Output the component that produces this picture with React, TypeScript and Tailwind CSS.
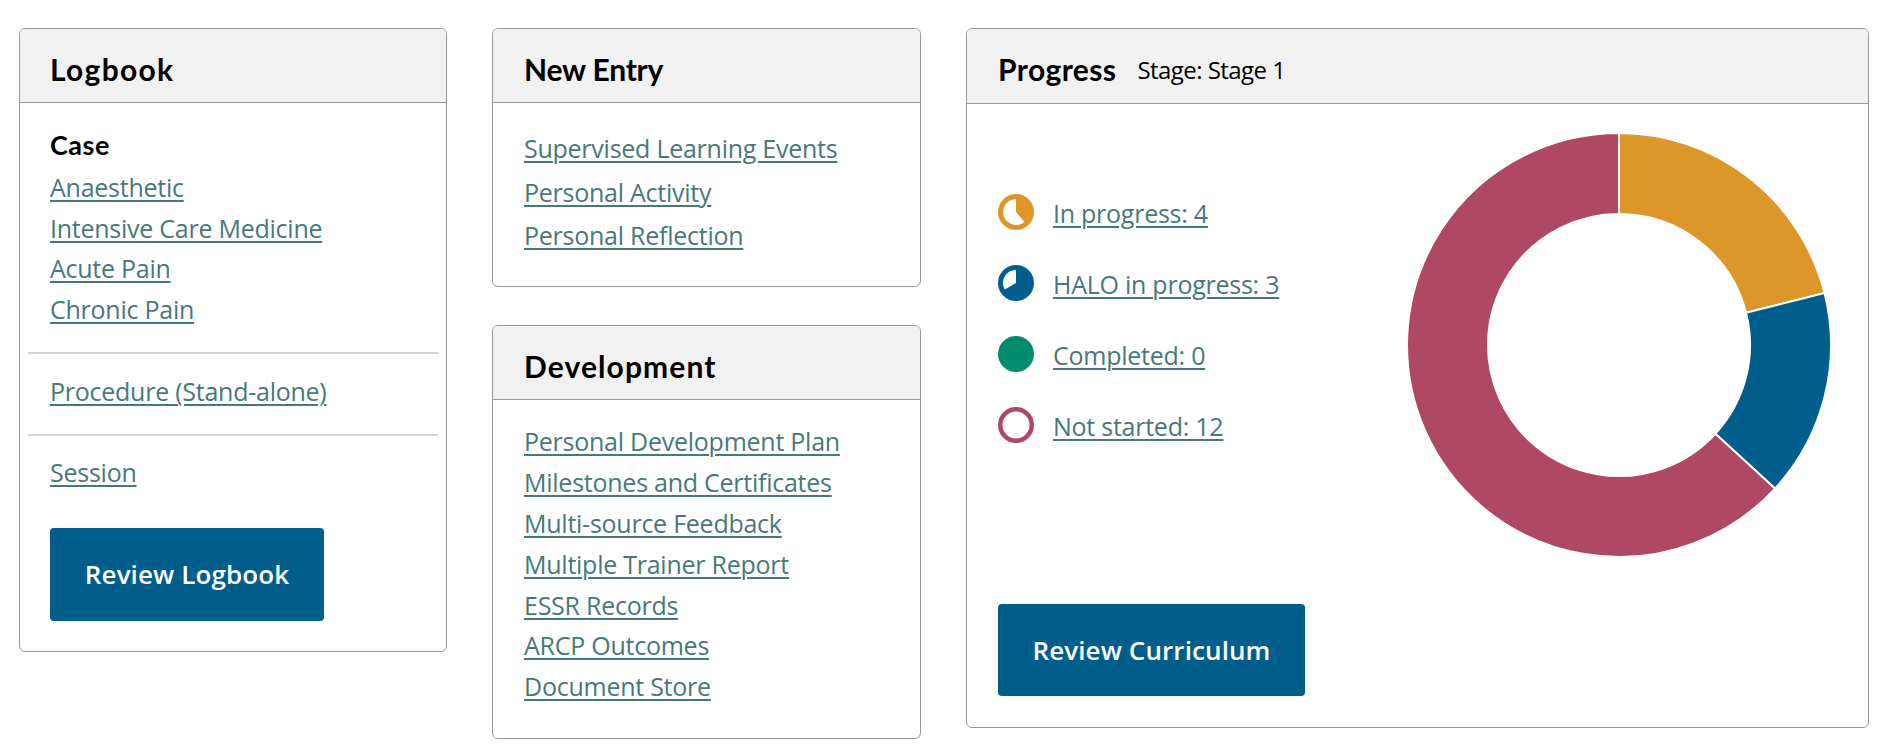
const link = "text-[#47797a] underline decoration-[2px] underline-offset-[3px] [font-family:'Open_Sans',sans-serif] text-[25px] leading-[34px] tracking-[-0.25px] block w-fit";
const head = "[font-family:'Lato',sans-serif] font-bold text-[30px] text-black leading-[36px]";
const btn = "bg-[#005e8c] text-white [font-family:'Open_Sans',sans-serif] font-semibold text-[26px] tracking-[0.1px] rounded-[4px] flex items-center justify-center";

function Panel({ title, titleClass, extra, className, headerClass, children }: { title: string; titleClass: string; extra?: string; className?: string; headerClass: string; children: React.ReactNode }) {
  return (
    <section className={"border border-[#999] rounded-[6px] overflow-hidden bg-white " + (className ?? "")}>
      <header className={"bg-[#f1f1f1] border-b border-[#999] flex items-center pt-[6px] " + headerClass}>
        <h2 className={head + " " + titleClass}>{title}</h2>
        {extra && <span className="ml-[21px] mt-[1px] text-[24px] text-black [font-family:'Open_Sans',sans-serif] tracking-[-0.55px]">{extra}</span>}
      </header>
      {children}
    </section>
  );
}

function Status({ children, label }: { children: React.ReactNode; label: string }) {
  return (
    <div className="flex items-center gap-[19px] h-[36px]">
      <svg width="36" height="36" viewBox="0 0 36 36" className="shrink-0 -mt-[2px]">{children}</svg>
      <a className={link}>{label}</a>
    </div>
  );
}

export default function App() {
  return (
    <div className="w-[1885px] h-[754px] bg-white overflow-hidden flex items-start pl-[19px] pt-[28px] gap-[45px]">
      <Panel title="Logbook" titleClass="tracking-[1.3px]" headerClass="h-[74px] pl-[30px]" className="w-[428px] h-[624px] shrink-0">
        <div className="pt-[24px]">
          <div className="px-[30px]">
            <div className="[font-family:'Lato',sans-serif] font-bold text-[27px] tracking-[0.5px] leading-[36px] text-black mb-[7px]">Case</div>
            <div className="flex flex-col gap-[6.7px]">
              <a className={link}>Anaesthetic</a>
              <a className={link}>Intensive Care Medicine</a>
              <a className={link}>Acute Pain</a>
              <a className={link}>Chronic Pain</a>
            </div>
          </div>
          <div className="mx-[8px] mt-[26px] border-t-2 border-[#d4d4d4]"></div>
          <div className="px-[30px] pt-[20px] pb-[26px]"><a className={link}>Procedure (Stand-alone)</a></div>
          <div className="mx-[8px] border-t-2 border-[#d4d4d4]"></div>
          <div className="px-[30px] pt-[19px]"><a className={link}>Session</a></div>
          <div className={btn + " h-[93px] w-[274px] ml-[30px] mt-[39px]"}>Review Logbook</div>
        </div>
      </Panel>
      <div className="w-[429px] shrink-0 flex flex-col gap-[38px]">
        <Panel title="New Entry" titleClass="tracking-[-0.2px]" headerClass="h-[74px] pl-[31px]" className="h-[259px]">
          <div className="px-[31px] pt-[28px] flex flex-col gap-[9.5px]">
            <a className={link}>Supervised Learning Events</a>
            <a className={link}>Personal Activity</a>
            <a className={link}>Personal Reflection</a>
          </div>
        </Panel>
        <Panel title="Development" titleClass="tracking-[1.1px]" headerClass="h-[74px] pl-[31px]" className="h-[414px]">
          <div className="px-[31px] pt-[24px] flex flex-col gap-[6.9px]">
            <a className={link}>Personal Development Plan</a>
            <a className={link}>Milestones and Certificates</a>
            <a className={link}>Multi-source Feedback</a>
            <a className={link}>Multiple Trainer Report</a>
            <a className={link}>ESSR Records</a>
            <a className={link}>ARCP Outcomes</a>
            <a className={link}>Document Store</a>
          </div>
        </Panel>
      </div>
      <Panel title="Progress" titleClass="tracking-[0.4px]" headerClass="h-[75px] pl-[31px]" extra="Stage: Stage 1" className="w-[903px] h-[700px] shrink-0">
        <div className="flex justify-between pl-[31px] pr-[37px]">
          <div>
            <div className="pt-[91px] flex flex-col gap-[35px]">
              <Status label="In progress: 4">
                <circle cx="18" cy="18" r="18" fill="#dc962a" />
                <path d="M18 5A13 13 0 1 0 26.4 28L18 18Z" fill="#fff" />
              </Status>
              <Status label="HALO in progress: 3">
                <circle cx="18" cy="18" r="18" fill="#005e8c" />
                <path d="M18 5A13 13 0 0 0 6.74 24.5L18 18Z" fill="#fff" />
              </Status>
              <Status label="Completed: 0">
                <circle cx="18" cy="18" r="18" fill="#008c6e" />
              </Status>
              <Status label="Not started: 12">
                <circle cx="18" cy="18" r="15.75" fill="#fff" stroke="#ae4864" strokeWidth="4.5" />
              </Status>
            </div>
            <div className={btn + " h-[92px] w-[307px] mt-[160px]"}>Review Curriculum</div>
          </div>
          <svg width="424" height="424" viewBox="0 0 424 424" className="mt-[29px]">
            <g stroke="#fff" strokeWidth="2">
              <path d="M212 0A212 212 0 0 1 417.5 160L339 179.8A131 131 0 0 0 212 81Z" fill="#dc962a" />
              <path d="M417.5 160A212 212 0 0 1 368 355.6L308.4 300.7A131 131 0 0 0 339 179.8Z" fill="#005e8c" />
              <path d="M368 355.6A212 212 0 1 1 212 0L212 81A131 131 0 1 0 308.4 300.7Z" fill="#ae4864" />
            </g>
          </svg>
        </div>
      </Panel>
    </div>
  );
}
